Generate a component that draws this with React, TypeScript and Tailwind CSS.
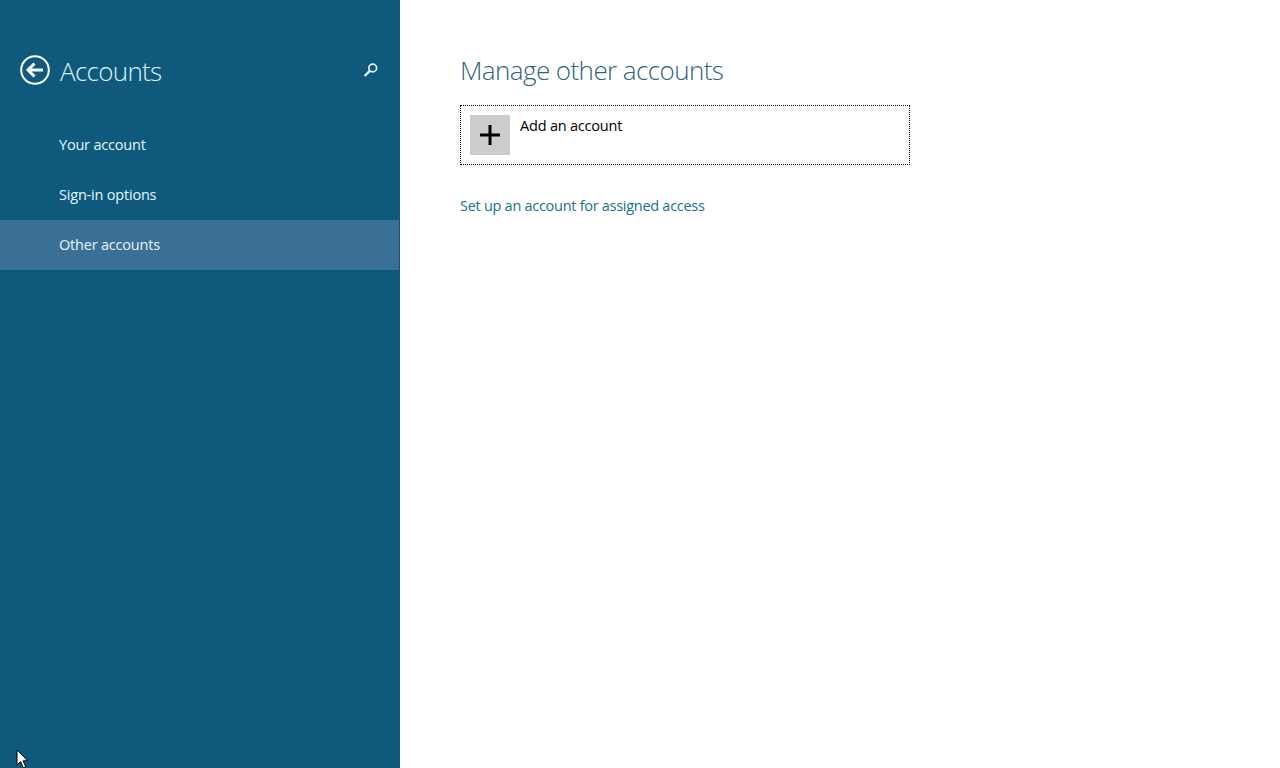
const navItems = ['Your account', 'Sign-in options', 'Other accounts'];

export default function App() {
  return (
    <div className="flex h-screen w-full overflow-hidden bg-white font-['Open_Sans',sans-serif]">
      {/* Left settings pane */}
      <aside className="relative w-[400px] shrink-0 bg-[#0f5a7c] pt-[52px]">
        <div className="flex h-9 items-center pl-5 pr-[21px]">
          <svg width="30" height="30" viewBox="0 0 30 30" fill="none" className="shrink-0">
            <circle cx="15" cy="15" r="13.8" stroke="#fff" strokeWidth="2" />
            <path d="M23 15H9M14.5 8.5 8 15l6.5 6.5" stroke="#f2fbfe" strokeWidth="3" />
          </svg>
          <h1 className="ml-[10px] flex-1 pt-px text-[26px] font-light leading-9 tracking-[-0.7px] text-[#dff3fb]">Accounts</h1>
          <svg width="16" height="16" viewBox="0 0 16 16" fill="none">
            <circle cx="9.7" cy="6" r="3.9" stroke="#e4f6fc" strokeWidth="1.7" />
            <path d="M6.8 8.9 1.6 14" stroke="#e4f6fc" strokeWidth="2.4" />
          </svg>
        </div>
        <nav className="mt-[32px] flex flex-col">
          {navItems.map((item) => (
            <div
              key={item}
              className={`flex h-[50px] items-center pl-[59px] text-[14.5px] tracking-[-0.2px] text-[#e4f6fc] ${item === 'Other accounts' ? 'mr-px bg-[#3a7096]' : ''}`}
            >
              {item}
            </div>
          ))}
        </nav>
        {/* Mouse pointer */}
        <svg width="14" height="20" viewBox="0 0 14 20" className="absolute bottom-[-1px] left-4">
          <path d="M1 1v15l3.6-3.4L7.4 19l2.4-1-2.7-6.2H12Z" fill="#fff" stroke="#000" strokeWidth="1" />
        </svg>
      </aside>

      {/* Content pane */}
      <main className="flex-1 pl-[60px] pt-[52px]">
        <h2 className="h-9 text-[26px] font-light leading-9 tracking-[-0.58px] text-[#2f6480]">Manage other accounts</h2>
        <button className="mt-[17px] flex h-[60px] w-[450px] gap-[10px] border border-dotted border-black p-[9px] text-left">
          <span className="flex h-10 w-10 shrink-0 items-center justify-center bg-[#cccccc]">
            <svg width="20" height="20" viewBox="0 0 20 20">
              <path d="M10 0v20M0 10h20" stroke="#000" strokeWidth="3" />
            </svg>
          </span>
          <span className="pt-px text-[14.5px] leading-5 tracking-[-0.2px] text-black">Add an account</span>
        </button>
        <a className="mt-[31px] block text-[14.5px] leading-5 tracking-[-0.28px] text-[#19718c]">
          Set up an account for assigned access
        </a>
      </main>
    </div>
  );
}
